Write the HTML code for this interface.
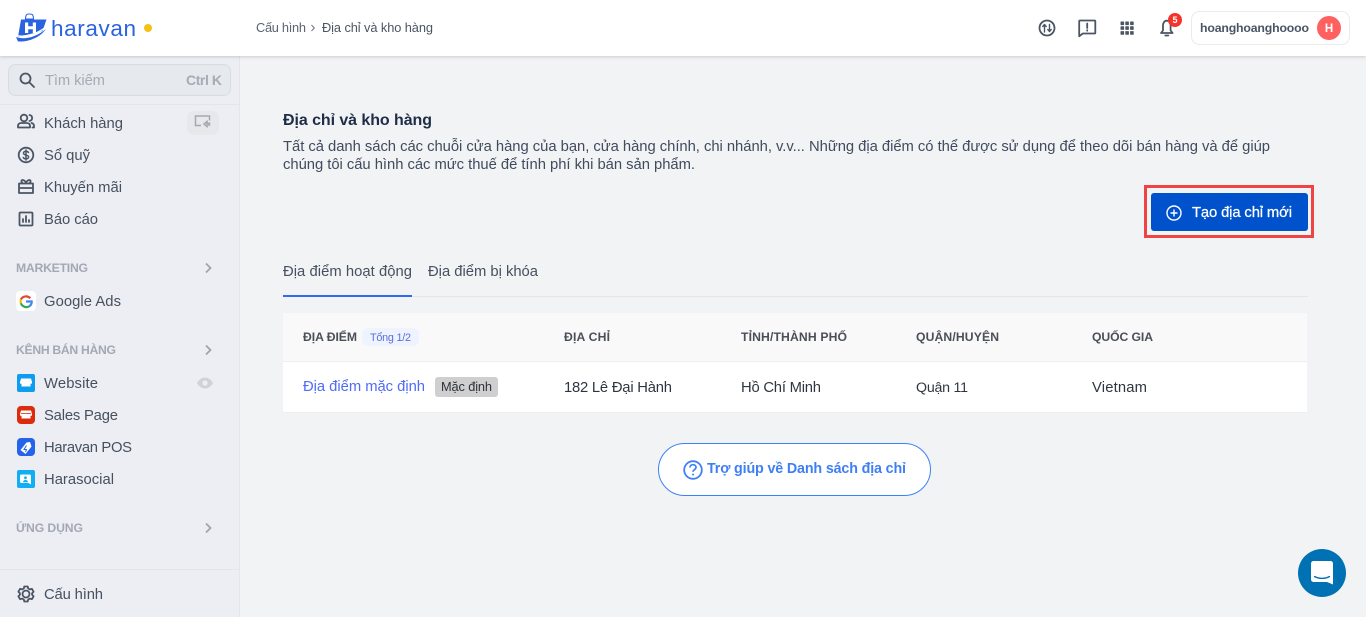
<!DOCTYPE html>
<html lang="vi"><head><meta charset="utf-8"><title>Địa chỉ và kho hàng</title>
<style>
html,body{margin:0;padding:0;width:1366px;height:617px;overflow:hidden;background:#f2f3f5}
svg{position:absolute;left:0;top:0;display:block}
text{font-family:"Liberation Sans",Arial,sans-serif;font-size:14.8px;fill:#46505f}
.b{font-weight:700}
.h{font-size:12.2px;font-weight:700;fill:#a4a8b4}
.th{font-size:12.2px;font-weight:700;fill:#4b4f57}
.td{fill:#2f3640}
.i{fill:none;stroke:#4b5563;stroke-width:1.8;stroke-linecap:round;stroke-linejoin:round}
</style></head><body>
<svg width="1366" height="617" viewBox="0 0 1366 617" xmlns="http://www.w3.org/2000/svg">
<defs><filter id="sh" x="-5%" y="-20%" width="110%" height="160%"><feDropShadow dx="0" dy="1" stdDeviation="1.5" flood-color="#000" flood-opacity=".16"/></filter></defs>
<!-- sidebar -->
<rect x="0" y="56" width="239" height="561" fill="#eceef3"/>
<rect x="239" y="56" width="1" height="561" fill="#e3e5e9"/>
<rect x="0" y="104" width="239" height="1" fill="#e3e5ea"/>
<rect x="0" y="569" width="239" height="1" fill="#e3e5ea"/>
<rect x="8.500" y="64.500" width="222" height="31" rx="7" fill="#e6e9ed" stroke="#d8dbe0"/>
<g class="i"><circle cx="25.500" cy="78.500" r="5"/><path d="M29.500 82.500l4.500 4.500"/></g>
<text x="45" y="85" textLength="60" style="fill:#a6abb5">Tìm kiếm</text>
<text x="186" y="85" textLength="36" class="b" style="font-size:14px;fill:#a6abb5">Ctrl K</text>
<!-- menu -->
<rect x="187" y="111" width="32" height="24" rx="7" fill="#e6e8ec"/>
<path d="M201 125.500h-5.500v-9.500h14v4.500M204 124l3-2.500v1.700h2.500v1.800H207v1.500z" fill="none" stroke="#a3a8b2" stroke-width="1.500"/>
<g class="i">
<circle cx="24" cy="118" r="3.300"/><path d="M18 127.500v-1.500c0-2 1.500-3 3.500-3h5c2 0 3.500 1 3.500 3v1.500zM29.500 115c1.800.3 2.600 1.500 2.600 3s-.8 2.700-2.600 3M31.500 123c1.600.4 2.500 1.400 2.500 3v1.500h-1.500"/>
<circle cx="26" cy="155" r="7.300"/><path d="M28.500 152.500c-.5-.8-1.500-1.300-2.500-1.300-1.400 0-2.500.7-2.500 1.900 0 2.600 5.100 1.300 5.100 3.900 0 1.200-1.200 1.900-2.600 1.900-1.100 0-2.200-.5-2.700-1.400M26 150v10" stroke-width="1.500"/>
<path d="M19 183.500h14v9.500H19zM19 188h14M23 183.500c-2-1-2-3.500-.5-3.500S26 181.500 26 183.500c0-2 2-3.500 3.500-3.500S31 182.500 29 183.500"/>
<rect x="19.500" y="212.500" width="13" height="13" rx="1"/><path d="M23 222v-3M26 222v-6M29 222v-2"/>
<path d="M26 590.500a3.500 3.500 0 100 7 3.500 3.500 0 000-7zM24.300 586.500h3.400l.5 2 1.700.9 2-.6 1.700 2.900-1.500 1.500v1.600l1.500 1.500-1.700 2.900-2-.6-1.700.9-.5 2h-3.400l-.5-2-1.700-.9-2 .6-1.700-2.900 1.500-1.500v-1.600l-1.500-1.500 1.700-2.900 2 .6 1.700-.9z"/>
</g>
<text x="44" y="128" textLength="79">Khách hàng</text>
<text x="44" y="160" textLength="46">Sổ quỹ</text>
<text x="44" y="192" textLength="78">Khuyến mãi</text>
<text x="44" y="224" textLength="54">Báo cáo</text>
<text x="16" y="272" textLength="72" class="h">MARKETING</text>
<path d="M206 263.500l4.500 4.500-4.500 4.500M206 345.500l4.500 4.500-4.500 4.500M206 523.500l4.500 4.500-4.500 4.500" fill="none" stroke="#a0a4ae" stroke-width="1.800"/>
<rect x="16" y="291" width="20" height="20" rx="4" fill="#fff"/>
<g fill="none" stroke-width="2.200"><path d="M30.300 298.300a5.800 5.800 0 00-9.400 1.200" stroke="#ea4335"/><path d="M20.900 299.500a5.800 5.800 0 000 3.800" stroke="#fbbc05"/><path d="M20.900 303.300a5.800 5.800 0 008.700 2.800" stroke="#34a853"/><path d="M29.600 306.100a5.500 5.500 0 002.100-4.600H26" stroke="#4285f4"/></g>
<text x="44" y="306" textLength="77">Google Ads</text>
<text x="16" y="354" textLength="100" class="h">KÊNH BÁN HÀNG</text>
<rect x="17" y="374" width="18" height="18" rx="2" fill="#0e9cf0"/>
<path d="M21 378.500h10l1 3.500v1c0 .8-1 1-1.500 .5v3h-9v-3c-.5.500-1.500.3-1.500-.5v-1z" fill="#fff"/>
<rect x="17" y="406" width="18" height="18" rx="4" fill="#db2d0e"/>
<path d="M21 410.500h10l1 3.500v1c0 .8-1 1-1.500 .5v3h-9v-3c-.5.500-1.500.3-1.500-.5v-1z" fill="#fff"/>
<path d="M21 413.500h10" stroke="#db2d0e" stroke-width=".8"/>
<rect x="17" y="438" width="18" height="18" rx="4" fill="#2563eb"/>
<path d="M30 441.500l1.500 4.500-6 7.500-5-4 6-7.500z" fill="#fff" transform="translate(0 .5)"/>
<path d="M26.500 445.500l-2.500 4h2.500l-1 2.500" fill="none" stroke="#2563eb" stroke-width="1"/>
<rect x="17" y="470" width="18" height="18" rx="2" fill="#10aff5"/>
<path d="M21.500 474.500h8c.9 0 1.500.6 1.500 1.500v8.500l-2.500-1.500h-7c-.9 0-1.500-.6-1.500-1.500V476c0-.9.600-1.500 1.500-1.500z" fill="#fff"/>
<circle cx="25.500" cy="477.800" r="1.400" fill="#10aff5"/><path d="M23 482.200c0-3 5-3 5 0z" fill="#10aff5"/>
<path d="M197 383c2.200-3.800 5-5.500 8-5.500s5.800 1.700 8 5.500c-2.200 3.800-5 5.500-8 5.500s-5.800-1.700-8-5.500z" fill="#cfd2d8"/><circle cx="205" cy="383" r="2.600" fill="#eceef3"/>
<text x="44" y="388" textLength="54">Website</text>
<text x="44" y="420" textLength="74">Sales Page</text>
<text x="44" y="452" textLength="88">Haravan POS</text>
<text x="44" y="484" textLength="70">Harasocial</text>
<text x="16" y="532" textLength="67" class="h">ỨNG DỤNG</text>
<text x="44" y="599" textLength="59">Cấu hình</text>
<!-- topbar -->
<rect x="0" y="0" width="1366" height="56" fill="#fff" filter="url(#sh)"/>
<g>
<path d="M25.500 20c0-5.500 1-6 4-6s4 .5 4 6" fill="none" stroke="#2a63e0" stroke-width="1.100"/>
<path d="M21 19.500h5v-1h8v1h12.500l-4 11.500-24.500 6z" fill="#2a63e0"/>
<path d="M25 22.500h3.200v3.800h4.600v-3.800H36v10.500h-3.200v-3.800h-4.600V33H25z" fill="#fff"/>
<path d="M16.500 35.500c9 2 20-1 30-9" fill="none" stroke="#fff" stroke-width="1.300"/>
<path d="M16 37c8 3 20 .5 30-8-6 8.500-17 13-28 12.500z" fill="#2a63e0"/>
</g>
<text x="51" y="36" textLength="85" style="font-size:22.500px;fill:#2a63e0">haravan</text>
<circle cx="148" cy="28" r="4" fill="#f5c211"/>
<text x="256" y="32" textLength="50" style="font-size:12.800px;fill:#5a6472">Cấu hình</text>
<path d="M311.500 25l2.800 3-2.800 3" fill="none" stroke="#6b7280" stroke-width="1"/>
<text x="322" y="32" textLength="111" style="font-size:12.800px;fill:#4b5563">Địa chỉ và kho hàng</text>
<g class="i">
<circle cx="1047" cy="28" r="7.500"/><path d="M1044.500 32v-7M1042.800 26.500l1.700-2 1.700 2M1049.500 24.500v7M1047.800 29.500l1.700 2 1.700-2" stroke-width="1.400"/>
<path d="M1080 20.500h14.500a.8.800 0 01.8.8v11.400a.8.800 0 01-.8.8h-11.700l-3.600 2.800V21.300a.8.800 0 01.8-.8zM1087.200 23.500v4.500M1087.200 30.200v.5"/>
<path d="M1163 25.500c0-2.800 1.600-4.800 3.800-4.800s3.800 2 3.800 4.800v5l2 2.500h-11.600l2-2.500zM1165.300 35.500h3"/>
</g>
<g fill="#4b5563">
<rect x="1120.500" y="21.500" width="3.600" height="3.600" rx=".6"/><rect x="1125.300" y="21.500" width="3.600" height="3.600" rx=".6"/><rect x="1130.100" y="21.500" width="3.600" height="3.600" rx=".6"/>
<rect x="1120.500" y="26.300" width="3.600" height="3.600" rx=".6"/><rect x="1125.300" y="26.300" width="3.600" height="3.600" rx=".6"/><rect x="1130.100" y="26.300" width="3.600" height="3.600" rx=".6"/>
<rect x="1120.500" y="31.100" width="3.600" height="3.600" rx=".6"/><rect x="1125.300" y="31.100" width="3.600" height="3.600" rx=".6"/><rect x="1130.100" y="31.100" width="3.600" height="3.600" rx=".6"/>
</g>
<circle cx="1175" cy="20" r="7" fill="#f5332d"/>
<text x="1175" y="23" text-anchor="middle" class="b" style="font-size:9px;fill:#fff">5</text>
<rect x="1191.500" y="11.500" width="158" height="33" rx="8" fill="#fff" stroke="#ebebeb"/>
<text x="1200" y="32" textLength="109" class="b" style="font-size:12.300px;fill:#4a5564">hoanghoanghoooo</text>
<circle cx="1329" cy="28" r="12" fill="#ff6060"/>
<text x="1329" y="32" text-anchor="middle" class="b" style="font-size:11.500px;fill:#fff">H</text>
<!-- page head -->
<text x="283" y="125" textLength="149" class="b" style="font-size:16px;fill:#1f2d47">Địa chỉ và kho hàng</text>
<text x="283" y="151" textLength="987" style="fill:#3f4c5e">Tất cả danh sách các chuỗi cửa hàng của bạn, cửa hàng chính, chi nhánh, v.v... Những địa điểm có thể được sử dụng để theo dõi bán hàng và để giúp</text>
<text x="283" y="169" textLength="412" style="fill:#3f4c5e">chúng tôi cấu hình các mức thuế để tính phí khi bán sản phẩm.</text>
<rect x="1145.500" y="186.500" width="167" height="50" fill="none" stroke="#f04444" stroke-width="3"/>
<rect x="1151" y="193" width="157" height="38" rx="3" fill="#0052cc"/>
<g fill="none" stroke="#fff" stroke-width="1.400"><circle cx="1174" cy="213" r="7"/><path d="M1174 209.500v7M1170.500 213h7"/></g>
<text x="1192" y="217" textLength="100" style="fill:#fff;stroke:#fff;stroke-width:.25">Tạo địa chỉ mới</text>
<!-- tabs -->
<text x="283" y="276" textLength="129">Địa điểm hoạt động</text>
<text x="428" y="276" textLength="110">Địa điểm bị khóa</text>
<rect x="283" y="296" width="1025" height="1" fill="#e3e5e8"/>
<rect x="283" y="295" width="129" height="2" fill="#2f6bf0"/>
<!-- table -->
<rect x="283" y="313" width="1024" height="48" fill="#f9f9fa"/>
<rect x="283" y="361" width="1024" height="1" fill="#eceef0"/>
<rect x="283" y="362" width="1024" height="50" fill="#fff"/>
<rect x="283" y="412" width="1024" height="1" fill="#eceef0"/>
<text x="303" y="341" textLength="54" class="th">ĐỊA ĐIỂM</text>
<rect x="362" y="328" width="57" height="18" rx="6" fill="#eef4ff"/>
<text x="370" y="341" textLength="41" style="font-size:10.800px;fill:#5b6fd6">Tổng 1/2</text>
<text x="564" y="341" textLength="46" class="th">ĐỊA CHỈ</text>
<text x="741" y="341" textLength="106" class="th">TỈNH/THÀNH PHỐ</text>
<text x="916" y="341" textLength="83" class="th">QUẬN/HUYỆN</text>
<text x="1092" y="341" textLength="61" class="th">QUỐC GIA</text>
<text x="303" y="391" textLength="122" style="fill:#4f6cf5">Địa điểm mặc định</text>
<rect x="435" y="377" width="63" height="20" rx="3" fill="#cfcfcf"/>
<text x="441" y="391" textLength="51" style="font-size:12.800px;fill:#2d3139">Mặc định</text>
<text x="564" y="392" textLength="108" class="td">182 Lê Đại Hành</text>
<text x="741" y="392" textLength="80" class="td">Hồ Chí Minh</text>
<text x="916" y="392" textLength="52" class="td" style="font-size:14.200px">Quận 11</text>
<text x="1092" y="392" textLength="55" class="td">Vietnam</text>
<!-- help -->
<rect x="658.500" y="443.500" width="272" height="52" rx="26" fill="#fff" stroke="#3b82f6"/>
<circle cx="693" cy="470" r="8.800" fill="none" stroke="#3f80f5" stroke-width="1.800"/>
<path d="M690 467.500c0-1.800 1.300-2.800 3-2.800s3 1 3 2.600c0 2.400-3 2.400-3 4.500" fill="none" stroke="#3f80f5" stroke-width="1.700"/>
<circle cx="693" cy="474.500" r="1" fill="#3f80f5"/>
<text x="707" y="473" textLength="199" class="b" style="font-size:14.300px;fill:#3f7ff5">Trợ giúp về Danh sách địa chỉ</text>
<!-- chat -->
<circle cx="1322" cy="573" r="24" fill="#0071b2"/>
<path d="M1313.500 561h17a2.500 2.500 0 012.500 2.500v21l-6-2.500h-13.500a2.500 2.500 0 01-2.500-2.500v-16a2.500 2.500 0 012.500-2.500z" fill="#fff"/>
<path d="M1314.500 576.500c4.500 2.500 10.500 2.500 15 0" fill="none" stroke="#0071b2" stroke-width="1.300" stroke-linecap="round"/>
</svg>
</body></html>
